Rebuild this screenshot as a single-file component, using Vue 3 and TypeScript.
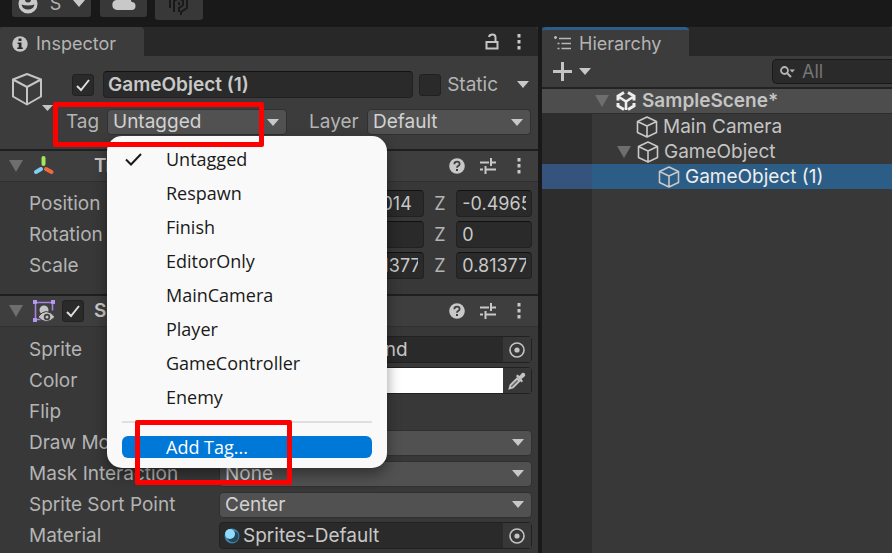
<script setup lang="ts">
import { ref } from 'vue'

interface VectorRow {
  label: string
  values: [string, string, string]
}
interface TreeNode {
  name: string
  kind: 'scene' | 'child' | 'parent' | 'leaf'
}

const tags = ['Untagged', 'Respawn', 'Finish', 'EditorOnly', 'MainCamera', 'Player', 'GameController', 'Enemy']
const currentTag = ref('Untagged')
const menuOpen = ref(true)
const objectName = ref('GameObject (1)')
const active = ref(true)
const isStatic = ref(false)
const rendererOn = ref(true)
const axes = ['X', 'Y', 'Z']

const vectors = ref<VectorRow[]>([
  { label: 'Position', values: ['0.2', '2.3014', '-0.49653'] },
  { label: 'Rotation', values: ['0', '0', '0'] },
  { label: 'Scale', values: ['0.81377', '0.81377', '0.81377'] },
])

const dropdowns = [
  { id: 'draw-mode', label: 'Draw Mode', value: 'Simple' },
  { id: 'mask', label: 'Mask Interaction', value: 'None' },
  { id: 'sort-point', label: 'Sprite Sort Point', value: 'Center' },
]

const nodes: TreeNode[] = [
  { name: 'SampleScene*', kind: 'scene' },
  { name: 'Main Camera', kind: 'child' },
  { name: 'GameObject', kind: 'parent' },
  { name: 'GameObject (1)', kind: 'leaf' },
]
const selected = ref('GameObject (1)')

function pickTag(tag: string) {
  currentTag.value = tag
  menuOpen.value = false
}
</script>

<template>
  <div class="editor">
    <header class="toolbar">
      <button class="tool account" type="button" aria-label="Account">
        <svg width="20" height="20" viewBox="0 0 20 20">
          <circle cx="10" cy="10" r="9.500" fill="#c8c8c8" />
          <circle cx="10" cy="5.500" r="3" fill="#383838" />
          <path d="M3.500 10.500Q10 12.500 16.500 10.500 15.500 15.500 10 15.500T3.500 10.500Z" fill="#383838" />
        </svg>
        <span>S</span>
        <svg width="12" height="8" viewBox="0 0 12 8"><path d="M0 0h12L6 7z" fill="#c8c8c8" /></svg>
      </button>
      <button class="tool cloud" type="button" aria-label="Cloud">
        <svg width="24" height="18" viewBox="0 0 24 18">
          <path d="M5 17a5 5 0 0 1-.6-9.900A6.500 6.500 0 0 1 16.500 5.500 4 4 0 0 1 19.500 9 4 4 0 0 1 19.500 17Z" fill="#c8c8c8" />
        </svg>
      </button>
      <button class="tool plastic" type="button" aria-label="Version control">
        <svg width="22" height="24" viewBox="0 0 22 24" fill="none" stroke="#191919" stroke-width="2">
          <path d="M2 14V5l8-4 9 4v9l-6 4v3M6 18V7l5-3 4 3v4l-4 3v4" />
          <path d="M11 8v3" />
        </svg>
      </button>
    </header>

    <main class="panels">
      <section class="panel inspector">
        <div class="tabbar">
          <h2 class="tab">
            <svg width="16" height="16" viewBox="0 0 16 16">
              <circle cx="8" cy="8" r="7.700" fill="#c4c4c4" />
              <path d="M6.500 2.500h3v2.500h-3zM5.500 6.500h4v5h1.300v1.500H5.300v-1.500h1.400V8H5.500z" fill="#282828" />
            </svg>
            Inspector
          </h2>
          <span class="spacer"></span>
          <button class="icon" type="button" aria-label="Lock">
            <svg width="14" height="17" viewBox="0 0 14 17" fill="none" stroke="#c4c4c4" stroke-width="2">
              <path d="M1.500 9h11v6.500h-11zM10.500 9V4.500Q10.500 1.500 7.500 1.500T4 4" />
            </svg>
          </button>
          <button class="icon" type="button" aria-label="Inspector menu">
            <svg class="dots" viewBox="0 0 4 16"><path d="M.5 0h3v3.500h-3zM.5 6h3v3.500h-3zM.5 12h3v3.500h-3z" /></svg>
          </button>
        </div>

        <div class="object">
          <button class="icon object-icon" type="button" aria-label="Object icon">
            <svg width="42" height="40" viewBox="0 0 42 40" fill="none" stroke="#c4c4c4" stroke-width="2" stroke-linejoin="round">
              <path d="M16 3 30 8.500v17L16 33.500 2 25.500V8.500ZM2 8.500l14 7.500 14-7.500M16 16v17.500" />
              <path d="M31 34h11l-5.500 6z" fill="#c4c4c4" stroke="none" />
            </svg>
          </button>
          <div class="object-fields">
            <div class="line first">
              <span class="check">
                <input v-model="active" type="checkbox" aria-label="Active">
                <svg v-if="active" viewBox="0 0 22 22"><path d="M5 12l4 4 8-10" /></svg>
              </span>
              <input v-model="objectName" class="field name" type="text" aria-label="Name">
              <label class="static">
                <span class="check">
                  <input v-model="isStatic" type="checkbox">
                  <svg v-if="isStatic" viewBox="0 0 22 22"><path d="M5 12l4 4 8-10" /></svg>
                </span>
                Static
              </label>
              <button class="icon static-arrow" type="button" aria-label="Static options">
                <svg class="caret" viewBox="0 0 12 7"><path d="M0 0h12L6 7z" /></svg>
              </button>
            </div>
            <div class="line second">
              <label for="tag">Tag</label>
              <div class="tag-wrap">
                <span class="drop">
                  <select id="tag" v-model="currentTag" @mousedown.prevent="menuOpen = !menuOpen">
                    <option v-for="tag in tags" :key="tag">{{ tag }}</option>
                  </select>
                  <svg class="caret" viewBox="0 0 12 7"><path d="M0 0h12L6 7z" /></svg>
                </span>
                <div v-if="menuOpen" class="menu" role="menu">
                  <button
                    v-for="tag in tags" :key="tag" class="item" type="button" role="menuitemradio"
                    :aria-checked="tag === currentTag" @click="pickTag(tag)"
                  >
                    <span class="mark">
                      <svg v-if="tag === currentTag" width="17" height="13" viewBox="0 0 17 13">
                        <path d="M1 6.500l5 5L16 1" fill="none" stroke="#1a1a1a" stroke-width="2" />
                      </svg>
                    </span>
                    {{ tag }}
                  </button>
                  <hr>
                  <button class="item add" type="button" role="menuitem"><span class="mark"></span>Add Tag...</button>
                  <span class="highlight around-add"></span>
                </div>
                <span class="highlight around-tag"></span>
              </div>
              <label class="layer-label" for="layer">Layer</label>
              <span class="drop layer">
                <select id="layer"><option>Default</option></select>
                <svg class="caret" viewBox="0 0 12 7"><path d="M0 0h12L6 7z" /></svg>
              </span>
            </div>
          </div>
        </div>

        <template v-for="part in ['Transform', 'Sprite Renderer']" :key="part">
          <div class="component-head">
            <svg class="fold" viewBox="0 0 14 12"><path d="M0 0h14L7 12z" /></svg>
            <svg v-if="part === 'Transform'" class="kind" viewBox="0 0 22 22" fill="none" stroke-width="4" stroke-linecap="round">
              <path d="M10.500 3v6" stroke="#a5e65a" />
              <path d="M8 14l-5 3" stroke="#7fd0f7" />
              <path d="M13 14l5.500 3" stroke="#f2693c" />
            </svg>
            <svg v-else class="kind" viewBox="0 0 22 22">
              <path d="M2.500 2.500v17M2.500 2.500h17v8M2.500 19.500h5" fill="none" stroke="#a584e0" stroke-width="1.600" />
              <path d="M0 0h4v4H0zM18 0h4v4h-4zM0 18h4v4H0z" fill="#b596f0" />
              <circle cx="11" cy="10" r="4.500" fill="#c4c4c4" />
              <path d="M5 17q8-11 17 0-9 9-17 0z" fill="#c4c4c4" stroke="#3e3e3e" />
              <circle cx="14" cy="17" r="3.200" fill="#3e3e3e" /><circle cx="14" cy="17" r="1.500" fill="#c4c4c4" />
            </svg>
            <span v-if="part === 'Sprite Renderer'" class="check">
              <input v-model="rendererOn" type="checkbox" aria-label="Sprite Renderer enabled">
              <svg v-if="rendererOn" viewBox="0 0 22 22"><path d="M5 12l4 4 8-10" /></svg>
            </span>
            <span v-else class="check-space"></span>
            <h3>{{ part }}</h3>
            <span class="spacer"></span>
            <button class="icon" type="button" aria-label="Help">
              <svg width="16" height="16" viewBox="0 0 16 16">
                <circle cx="8" cy="8" r="7.800" fill="#c8c8c8" />
                <path d="M5.300 6.200Q5.500 3.700 8 3.700t2.600 2.200Q10.600 7.200 9 8 8 8.600 8 9.800" fill="none" stroke="#3e3e3e" stroke-width="1.800" />
                <path d="M7 11h2v2H7z" fill="#3e3e3e" />
              </svg>
            </button>
            <button class="icon" type="button" aria-label="Presets">
              <svg width="16" height="16" viewBox="0 0 16 16" fill="none" stroke="#c8c8c8" stroke-width="2">
                <path d="M0 4.500h9M11 0v8M11 4.500h5M0 11.500h3M5.500 8v8M5.500 11.500H16" />
              </svg>
            </button>
            <button class="icon" type="button" aria-label="Component menu">
              <svg class="dots" viewBox="0 0 4 16"><path d="M.5 0h3v3.500h-3zM.5 6h3v3.500h-3zM.5 12h3v3.500h-3z" /></svg>
            </button>
          </div>

          <div v-if="part === 'Transform'" class="component-body transform">
            <div v-for="row in vectors" :key="row.label" class="prop">
              <span>{{ row.label }}</span>
              <div class="vector">
                <label v-for="(axis, i) in axes" :key="axis">
                  {{ axis }}<input v-model="row.values[i]" class="field" type="text">
                </label>
              </div>
            </div>
          </div>

          <div v-else class="component-body">
            <div class="prop">
              <label for="sprite">Sprite</label>
              <div class="picker">
                <svg class="ball" viewBox="0 0 16 16"><path d="M2 2h12v12H2z" fill="#c4c4c4" /></svg>
                <input id="sprite" class="field with-ball" type="text" value="Level_Background" readonly>
                <button class="icon pick" type="button" aria-label="Select sprite">
                  <svg width="16" height="16" viewBox="0 0 16 16"><circle cx="8" cy="8" r="7" fill="none" stroke="#c4c4c4" stroke-width="1.600" /><circle cx="8" cy="8" r="2.600" fill="#c4c4c4" /></svg>
                </button>
              </div>
            </div>
            <div class="prop">
              <span>Color</span>
              <div class="picker">
                <button class="swatch" type="button" aria-label="Color"></button>
                <button class="icon pick" type="button" aria-label="Pick color">
                  <svg width="18" height="18" viewBox="0 0 18 18">
                    <path d="M1.500 16.500l1-3.500L9 6.500l2.500 2.500L5 15.500z" fill="#6a6a6a" stroke="#c4c4c4" stroke-width="1.800" />
                    <path d="M8 4l1.500-1.500L11.500 4 14 1q2-1 3 1t-1 3l-2.500 2 1.500 2-1.500 1.500z" fill="#c4c4c4" />
                  </svg>
                </button>
              </div>
            </div>
            <div class="prop">
              <span>Flip</span>
              <div class="flips">
                <label v-for="axis in ['X', 'Y']" :key="axis"><span class="check"><input type="checkbox"></span>{{ axis }}</label>
              </div>
            </div>
            <div v-for="d in dropdowns" :key="d.id" class="prop">
              <label :for="d.id">{{ d.label }}</label>
              <span class="drop">
                <select :id="d.id"><option>{{ d.value }}</option></select>
                <svg class="caret" viewBox="0 0 12 7"><path d="M0 0h12L6 7z" /></svg>
              </span>
            </div>
            <div class="prop">
              <label for="material">Material</label>
              <div class="picker">
                <svg class="ball" viewBox="0 0 16 16">
                  <circle cx="8" cy="8" r="7.500" fill="#3f7fa0" /><circle cx="9" cy="8.500" r="5.500" fill="#22465a" /><circle cx="6" cy="6" r="5" fill="#8fdcff" />
                </svg>
                <input id="material" class="field with-ball" type="text" value="Sprites-Default" readonly>
                <button class="icon pick" type="button" aria-label="Select material">
                  <svg width="16" height="16" viewBox="0 0 16 16"><circle cx="8" cy="8" r="7" fill="none" stroke="#c4c4c4" stroke-width="1.600" /><circle cx="8" cy="8" r="2.600" fill="#c4c4c4" /></svg>
                </button>
              </div>
            </div>
          </div>
        </template>
      </section>

      <section class="panel hierarchy">
        <div class="tabbar">
          <h2 class="tab focused">
            <svg width="17" height="16" viewBox="0 0 17 16" fill="none" stroke="#b8b8b8" stroke-width="1.600">
              <path d="M0 1.500h3M1.500 0v3M5 2.500h12M3.500 7.500h2M7.500 7.500H17M3.500 12.500h2M7.500 12.500H17" />
            </svg>
            Hierarchy
          </h2>
        </div>
        <div class="tools">
          <button class="icon create" type="button" aria-label="Create">
            <svg width="19" height="19" viewBox="0 0 19 19"><path d="M8 0h3v8h8v3h-8v8H8v-8H0V8h8z" fill="#c4c4c4" /></svg>
            <svg class="caret" viewBox="0 0 12 7"><path d="M0 0h12L6 7z" /></svg>
          </button>
          <label class="search">
            <svg width="15" height="12" viewBox="0 0 15 12">
              <circle cx="4.500" cy="4.500" r="3.500" fill="none" stroke="#b4b4b4" stroke-width="1.800" />
              <path d="M7 7l4 4" stroke="#b4b4b4" stroke-width="2" /><path d="M9.500 3.500H15L12.200 6.500z" fill="#b4b4b4" />
            </svg>
            <input type="search" placeholder="All" aria-label="Search hierarchy">
          </label>
        </div>
        <ul class="tree">
          <li
            v-for="node in nodes" :key="node.name" :class="[node.kind, { selected: node.name === selected }]"
            @click="selected = node.name"
          >
            <span class="gutter"></span>
            <svg v-if="node.kind === 'scene' || node.kind === 'parent'" class="fold" viewBox="0 0 14 12"><path d="M0 0h14L7 12z" /></svg>
            <svg v-if="node.kind === 'scene'" class="node-icon" viewBox="0 0 22 22" fill="none" stroke="#eeeeee" stroke-width="3">
              <path d="M9 2.500 3 6v4.500M13 2.500 19 6v4.500M3 13v3l6 3.500M19 13v3l-6 3.500" />
              <path d="M4 7l7 4.500L18 7M11 11.500V20" stroke-width="2.600" />
            </svg>
            <svg v-else class="node-icon" viewBox="0 0 22 22" fill="none" stroke="#c8c8c8" stroke-width="1.600" stroke-linejoin="round">
              <path d="M11 1 20.500 5.500v11L11 21 1.500 16.500v-11ZM1.500 5.500 11 10l9.500-4.500M11 10v11" />
            </svg>
            <span>{{ node.name }}</span>
          </li>
        </ul>
      </section>
    </main>
  </div>
</template>

<style>
body {
  background: #191919;
}
</style>

<style scoped>
.editor,
.editor * {
  box-sizing: border-box;
}
.editor {
  height: 100vh;
  display: flex;
  flex-direction: column;
  overflow: hidden;
  background: #191919;
  color: #b4b4b4;
  font: 19px/24px Inter, "Liberation Sans", sans-serif;
}
button,
input,
select {
  font: inherit;
  color: inherit;
  margin: 0;
}
h2,
h3 {
  margin: 0;
  font-size: 19px;
  line-height: 24px;
}
h2 {
  font-size: 18px;
  font-weight: 400;
}
svg {
  display: block;
  flex: none;
}
.spacer {
  flex: 1;
}
.icon {
  display: grid;
  place-items: center;
  width: 20px;
  padding: 0;
  border: 0;
  background: none;
}
.caret {
  width: 12px;
  height: 7px;
  fill: #c8c8c8;
}
.dots {
  width: 4px;
  height: 16px;
  fill: #c8c8c8;
}
.fold {
  width: 14px;
  height: 12px;
  fill: #6e6e6e;
}

/* The toolbar is scrolled partly above the window. */
.toolbar {
  display: flex;
  flex: none;
  gap: 8px;
  height: 44px;
  margin-top: -17px;
  padding-left: 12px;
  font-size: 18px;
}
.tool {
  display: flex;
  align-items: center;
  justify-content: center;
  height: 34px;
  padding: 8px 0 0;
  border: 0;
  border-radius: 3px;
  background: #383838;
}
.account {
  width: 79px;
  gap: 12px;
}
.cloud {
  width: 47px;
  margin-left: 1px;
  padding-top: 4px;
}
.plastic {
  width: 48px;
  height: 37px;
}

.panels {
  flex: 1;
  min-height: 0;
  display: grid;
  grid-template-columns: 538fr 350fr;
  gap: 4px;
}
.panel {
  min-width: 0;
  background: #383838;
}
.tabbar {
  display: flex;
  height: 29px;
  padding-right: 9px;
  gap: 7px;
  background: #282828;
  border-radius: 4px 4px 0 0;
}
.tab {
  display: flex;
  align-items: center;
  gap: 8px;
  padding: 4px 28px 0 12px;
  border-radius: 4px 4px 0 0;
  background: #3c3c3c;
}
.tab.focused {
  border-top: 3px solid #2c5d87;
  padding-top: 1px;
}

.object {
  display: flex;
  padding: 15px 7px 14px 11px;
  background: #3c3c3c;
}
.object-icon {
  width: 42px;
  height: 40px;
  margin-right: 13px;
}
.object-fields {
  flex: 1;
  min-width: 0;
  display: grid;
  gap: 11px;
}
.line {
  display: flex;
  align-items: center;
}
.first {
  padding-left: 6px;
}
.second label {
  width: 41px;
}
.second .layer-label {
  width: 58px;
  margin-left: 22px;
}
.check {
  display: grid;
  flex: none;
  width: 22px;
  height: 22px;
}
.check > * {
  grid-area: 1 / 1;
}
.check input {
  appearance: none;
  width: 22px;
  height: 22px;
  border: 1px solid #212121;
  border-radius: 3px;
  background: #2a2a2a;
}
.check svg {
  fill: none;
  stroke: #dedede;
  stroke-width: 2;
  pointer-events: none;
}
.check-space {
  width: 22px;
}
.field {
  flex: 1;
  min-width: 0;
  width: 100%;
  height: 27px;
  padding: 0 5px;
  border: 1px solid #212121;
  border-top-color: #111111;
  border-radius: 4px;
  background: #2a2a2a;
  color: #c8c8c8;
}
.name {
  margin: 0 6px 0 9px;
  padding-left: 4px;
  font-weight: 600;
}
.static {
  display: flex;
  align-items: center;
  gap: 6px;
}
.static-arrow {
  width: 12px;
  margin: 0 2px 0 19px;
}
.drop {
  display: grid;
  align-items: center;
  flex: 1;
  min-width: 0;
}
.drop > * {
  grid-area: 1 / 1;
}
.drop select {
  appearance: none;
  width: 100%;
  height: 26px;
  padding: 0 24px 0 5px;
  border: 1px solid #303030;
  border-radius: 4px;
  background: #515151;
  color: #d2d2d2;
  line-height: 22px;
}
.drop .caret {
  justify-self: end;
  margin-right: 8px;
  pointer-events: none;
}
.tag-wrap {
  position: relative;
  display: flex;
  flex: 180;
}
.layer {
  flex: 164;
}

.menu {
  position: absolute;
  z-index: 2;
  top: 27px;
  left: 0;
  width: 280px;
  padding: 6px 15px 10px;
  border-radius: 15px;
  background: #f9f9f9;
  box-shadow: 0 6px 14px rgba(0, 0, 0, 0.4);
  color: #1a1a1a;
  font: 18px/22px "Open Sans", "Noto Sans", sans-serif;
}
.item {
  display: flex;
  align-items: center;
  width: 100%;
  height: 34px;
  padding: 0;
  border: 0;
  border-radius: 6px;
  background: none;
}
.mark {
  width: 44px;
  padding-left: 3px;
}
.menu hr {
  height: 2px;
  margin: 7px 0 13px;
  border: 0;
  background: #dfdfdf;
}
.item.add {
  height: 22px;
  background: #0078d7;
  color: #ffffff;
}
.highlight {
  position: absolute;
  border: 5px solid #ff0000;
  border-radius: 2px;
  pointer-events: none;
}
.around-tag {
  z-index: 3;
  left: -54px;
  top: -7px;
  width: 211px;
  height: 45px;
}
.around-add {
  left: 28px;
  bottom: -17px;
  width: 157px;
  height: 65px;
}

.component-head {
  display: flex;
  align-items: center;
  height: 33px;
  padding: 0 9px;
  border-top: 2px solid #1f1f1f;
  border-bottom: 1px solid #303030;
  background: #3e3e3e;
}
.kind {
  width: 22px;
  height: 22px;
  margin: 0 7px 0 10px;
}
.component-head h3 {
  margin-left: 10px;
  font-weight: 600;
  color: #c8c8c8;
}
.component-head .icon {
  margin-left: 11px;
}
.component-body {
  display: grid;
  gap: 4px;
  padding: 9px 6px 6px 29px;
}
.transform {
  padding-top: 8px;
  padding-bottom: 15px;
}
.prop {
  display: grid;
  grid-template-columns: 190fr 313fr;
  align-items: center;
  height: 27px;
}
.vector {
  display: flex;
  gap: 10px;
  font-size: 18px;
}
.vector label {
  display: grid;
  grid-template-columns: 22px 1fr;
  align-items: center;
  flex: 1;
  min-width: 0;
}
.picker {
  position: relative;
  display: flex;
  height: 27px;
  border: 1px solid #212121;
  border-radius: 4px;
  background: #2a2a2a;
}
.picker .field {
  height: 25px;
  border: 0;
}
.picker .pick {
  width: 28px;
  background: #373737;
}
.ball {
  width: 16px;
  height: 16px;
  margin: 5px 0 0 4px;
}
.picker .with-ball {
  padding-left: 3px;
}
.swatch {
  flex: 1;
  border: 0;
  background: #ffffff;
}
.flips,
.flips label {
  display: flex;
  gap: 8px;
}

.tools {
  display: flex;
  align-items: center;
  height: 33px;
  padding-left: 11px;
  background: #3c3c3c;
  border-bottom: 2px solid #232323;
}
.create {
  display: flex;
  align-items: center;
  gap: 7px;
  width: 38px;
}
.search {
  display: flex;
  align-items: center;
  flex: 1;
  height: 25px;
  margin-left: 181px;
  padding-left: 7px;
  gap: 7px;
  border: 1px solid #191919;
  border-right: 0;
  border-radius: 5px 0 0 5px;
  background: #2a2a2a;
  font-size: 18px;
}
.search input {
  flex: 1;
  min-width: 0;
  padding: 0;
  border: 0;
  outline: 0;
  background: none;
}
.search input::placeholder {
  color: #757575;
  opacity: 1;
}
.hierarchy {
  display: flex;
  flex-direction: column;
}
.tree {
  flex: 1;
  margin: 0;
  padding: 0;
  list-style: none;
  background: linear-gradient(to right, #2d2d2d 50px, #383838 50px);
}
.tree li {
  display: flex;
  align-items: center;
  height: 25px;
  color: #c4c4c4;
}
.gutter {
  align-self: stretch;
  width: 50px;
}
.node-icon {
  width: 22px;
  height: 22px;
  margin: 0 5px 0 6px;
}
.tree .scene {
  background: #4d4d4d;
  border-bottom: 1px solid #2d2d2d;
  font-weight: 600;
}
.scene .fold {
  margin-left: 3px;
}
.child .gutter {
  margin-right: 38px;
}
.parent .fold {
  margin-left: 25px;
}
.leaf .gutter {
  margin-right: 60px;
}
.tree .selected {
  background: #2c5d87;
  color: #eeeeee;
}
.tree .selected .gutter {
  background: #36537d;
}
</style>
